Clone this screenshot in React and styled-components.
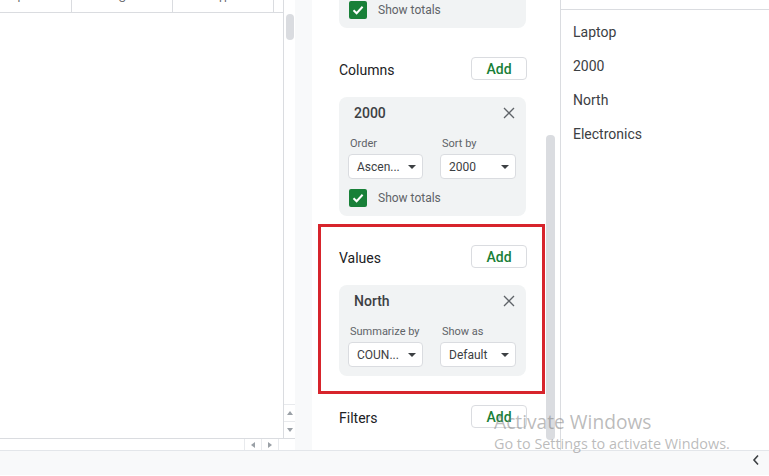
import React from 'react';
import styled, { createGlobalStyle } from 'styled-components';

const GlobalStyle = createGlobalStyle`
  html, body {
    margin: 0;
    padding: 0;
    background: #ffffff;
  }
  body {
    font-family: Roboto, "Liberation Sans", Arial, sans-serif;
    overflow: hidden;
  }
`;

const Frame = styled.div`
  position: relative;
  width: 769px;
  height: 476px;
  display: flex;
  flex-direction: column;
  overflow: hidden;
  background: #ffffff;
`;

const Main = styled.div`
  display: flex;
  height: 450px;
  flex-shrink: 0;
`;

/* spreadsheet */

const SheetArea = styled.div`
  width: 295px;
  display: flex;
  flex-direction: column;
`;

const SheetBody = styled.div`
  flex: 1;
  display: flex;
`;

const Grid = styled.div`
  width: 283px;
  display: flex;
  flex-direction: column;
`;

const HeaderRow = styled.div`
  height: 12px;
  display: flex;
  border-bottom: 1px solid #dadce0;
  overflow: hidden;
`;

const HeaderCell = styled.div`
  width: ${props => props.width}px;
  flex-shrink: 0;
  border-right: ${props => (props.last ? 'none' : '1px solid #dadce0')};
  padding-right: ${props => props.shift || 0}px;
  box-sizing: border-box;
  text-align: center;
  font-size: 11px;
  color: #5f6368;
  line-height: 12px;
  overflow: hidden;

  span {
    display: block;
    margin-top: -7px;
  }
`;

const VScroll = styled.div`
  width: 12px;
  border-left: 1px solid #dadce0;
  display: flex;
  flex-direction: column;
  align-items: center;
  padding-top: 14px;
`;

const ScrollThumb = styled.div`
  width: ${props => props.w || 8}px;
  height: ${props => props.h}px;
  border-radius: 4px;
  background: #dadce0;
`;

const Spacer = styled.div`
  flex: 1;
`;

const ArrowCell = styled.div`
  width: 100%;
  height: 16px;
  border-top: 1px solid #e8eaed;
  display: flex;
  align-items: center;
  justify-content: center;
`;

const Tri = styled.div`
  width: 0;
  height: 0;
  border-left: 3px solid transparent;
  border-right: 3px solid transparent;
  ${props => (props.up
    ? 'border-bottom: 4px solid #9aa0a6;'
    : 'border-top: 4px solid #9aa0a6;')}
`;

const HScrollRow = styled.div`
  height: 11px;
  border-top: 1px solid #dadce0;
  display: flex;
`;

const HArrow = styled.div`
  width: 16px;
  border-left: 1px solid #e8eaed;
  display: flex;
  align-items: center;
  justify-content: center;
`;

const SideTri = styled.div`
  width: 0;
  height: 0;
  border-top: 3px solid transparent;
  border-bottom: 3px solid transparent;
  ${props => (props.left
    ? 'border-right: 4px solid #9aa0a6;'
    : 'border-left: 4px solid #9aa0a6;')}
`;

/* gutter between sheet and panel */

const Gutter = styled.div`
  width: 17px;
  background: #f8f9fa;
  display: flex;
  flex-direction: column;
  align-items: flex-end;
  padding-top: 172px;
  box-sizing: border-box;
`;

const DragDots = styled.div`
  display: flex;
  flex-direction: column;
  gap: 3px;
  margin-right: -6px;

  i {
    display: block;
    width: 4px;
    height: 4px;
    border-radius: 50%;
    background: #5f6368;
  }
`;

/* pivot editor panel */

const Panel = styled.div`
  position: relative;
  width: 248px;
  display: flex;
  background: #ffffff;
`;

const PanelContent = styled.div`
  width: 188px;
  padding-left: 27px;
  display: flex;
  flex-direction: column;
`;

const PanelScroll = styled.div`
  flex: 1;
  display: flex;
  justify-content: flex-end;
  padding: 135px 5px 0 0;
`;

const Section = styled.div`
  margin-top: 29px;
  display: flex;
  flex-direction: column;
`;

const SectionHead = styled.div`
  height: 23px;
  display: flex;
  align-items: center;
  justify-content: space-between;
`;

const SectionLabel = styled.div`
  font-size: 14px;
  color: #202124;
  padding-top: 3px;
`;

const AddButton = styled.button`
  width: 56px;
  height: 23px;
  border: 1px solid #dadce0;
  border-radius: 4px;
  background: #ffffff;
  color: #188038;
  font-family: Roboto, "Liberation Sans", Arial, sans-serif;
  font-size: 14px;
  font-weight: 500;
  padding: 0;
  margin-right: 0;
`;

const Card = styled.div`
  background: #f1f3f4;
  border-radius: ${props => (props.clipped ? '0 0 8px 8px' : '8px')};
  padding: ${props => (props.clipped ? '1px' : '0')} 10px 9px 9px;
  margin-top: ${props => (props.clipped ? '0' : '17px')};
  display: flex;
  flex-direction: column;
  width: 187px;
  box-sizing: border-box;
`;

const CardTitle = styled.div`
  height: 32px;
  display: flex;
  align-items: center;
  justify-content: space-between;
  padding-left: 6px;
  font-size: 14px;
  font-weight: 500;
  color: #3c4043;
`;

const CloseIcon = styled.svg`
  width: 12px;
  height: 12px;
  margin-right: 1px;
`;

const Fields = styled.div`
  display: flex;
  gap: 17px;
  padding-top: 9px;
`;

const Field = styled.div`
  width: ${props => props.width}px;
  display: flex;
  flex-direction: column;
`;

const FieldLabel = styled.div`
  font-size: 11px;
  line-height: 12px;
  color: #5f6368;
  padding-left: 2px;
  margin-bottom: 4px;
`;

const Select = styled.div`
  height: 25px;
  background: #ffffff;
  border: 1px solid #dadce0;
  border-radius: 4px;
  box-sizing: border-box;
  display: flex;
  align-items: center;
  justify-content: space-between;
  padding: 0 6px 0 8px;
  font-size: 12px;
  color: #3c4043;
`;

const Caret = styled.div`
  width: 0;
  height: 0;
  border-left: 4px solid transparent;
  border-right: 4px solid transparent;
  border-top: 4px solid #3c4043;
`;

const CheckRow = styled.div`
  display: flex;
  align-items: center;
  gap: 11px;
  margin-top: ${props => props.gap || 0}px;
  padding-left: 1px;
  font-size: 12px;
  color: #5f6368;
`;

const CheckBox = styled.div`
  width: 18px;
  height: 18px;
  border-radius: 2px;
  background: #188038;
  display: flex;
  align-items: center;
  justify-content: center;
`;

const Highlight = styled.div`
  position: absolute;
  left: 6px;
  top: 224px;
  width: 227px;
  height: 170px;
  border: 3px solid #d7242c;
  box-sizing: border-box;
  pointer-events: none;
`;

/* preview column on the right */

const RightPane = styled.div`
  flex: 1;
  border-left: 1px solid #dadce0;
  display: flex;
  flex-direction: column;
`;

const RightHead = styled.div`
  height: 9px;
  border-bottom: 1px solid #dadce0;
`;

const ValueList = styled.div`
  padding: 5px 0 0 12px;
  display: flex;
  flex-direction: column;
`;

const ValueItem = styled.div`
  height: 34px;
  line-height: 34px;
  font-size: 14px;
  color: #3c4043;
`;

/* bottom */

const BottomBar = styled.div`
  height: 21px;
  flex-shrink: 0;
  border-top: 1px solid #e3e6ea;
  background: #f8f9fa;
  display: flex;
  justify-content: flex-end;
  padding: 3px 9px 0 0;
`;

const Watermark = styled.div`
  position: absolute;
  left: 494px;
  top: 409px;
  font-family: "Open Sans", "Noto Sans", sans-serif;
  color: rgba(120, 120, 120, 0.5);
  pointer-events: none;
`;

const WatermarkTitle = styled.div`
  font-size: 19.2px;
  line-height: 25px;
`;

const WatermarkText = styled.div`
  font-size: 14.4px;
  line-height: 20px;
`;

const Check = () => (
  <svg width="14" height="14" viewBox="0 0 14 14">
    <path d="M2.5 7.2 L5.6 10.2 L11.6 3.8" fill="none" stroke="#ffffff" strokeWidth="2" />
  </svg>
);

const Close = () => (
  <CloseIcon viewBox="0 0 12 12">
    <path d="M1 1 L11 11 M11 1 L1 11" stroke="#5f6368" strokeWidth="1.3" fill="none" />
  </CloseIcon>
);

const PivotCard = ({ title, fields, totals }) => (
  <Card>
    <CardTitle>
      {title}
      <Close />
    </CardTitle>
    <Fields>
      {fields.map((f, i) => (
        <Field key={f.label + '-' + i} width={f.width}>
          <FieldLabel>{f.label}</FieldLabel>
          <Select>
            {f.value}
            <Caret />
          </Select>
        </Field>
      ))}
    </Fields>
    {totals && (
      <CheckRow gap={10}>
        <CheckBox><Check /></CheckBox>
        Show totals
      </CheckRow>
    )}
  </Card>
);

const columns = [
  { letter: 'F', width: 72, shift: 30 },
  { letter: 'G', width: 101 },
  { letter: 'H', width: 101 },
  { letter: '', width: 9, last: true },
];

const values = ['Laptop', '2000', 'North', 'Electronics'];

export default function App() {
  return (
    <Frame>
      <GlobalStyle />
      <Main>
        <SheetArea>
          <SheetBody>
            <Grid>
              <HeaderRow>
                {columns.map((c, i) => (
                  <HeaderCell key={'col-' + i} width={c.width} shift={c.shift} last={c.last}>
                    <span>{c.letter}</span>
                  </HeaderCell>
                ))}
              </HeaderRow>
            </Grid>
            <VScroll>
              <ScrollThumb h={26} />
              <Spacer />
              <ArrowCell><Tri up /></ArrowCell>
              <ArrowCell><Tri /></ArrowCell>
            </VScroll>
          </SheetBody>
          <HScrollRow>
            <Spacer />
            <HArrow><SideTri left /></HArrow>
            <HArrow><SideTri /></HArrow>
            <HArrow />
          </HScrollRow>
        </SheetArea>

        <Gutter>
          <DragDots><i /><i /><i /></DragDots>
        </Gutter>

        <Panel>
          <PanelContent>
            <Card clipped>
              <CheckRow>
                <CheckBox><Check /></CheckBox>
                Show totals
              </CheckRow>
            </Card>

            <Section>
              <SectionHead>
                <SectionLabel>Columns</SectionLabel>
                <AddButton>Add</AddButton>
              </SectionHead>
              <PivotCard
                title="2000"
                totals
                fields={[
                  { label: 'Order', value: 'Ascen...', width: 75 },
                  { label: 'Sort by', value: '2000', width: 76 },
                ]}
              />
            </Section>

            <Section>
              <SectionHead>
                <SectionLabel>Values</SectionLabel>
                <AddButton>Add</AddButton>
              </SectionHead>
              <PivotCard
                title="North"
                fields={[
                  { label: 'Summarize by', value: 'COUN...', width: 75 },
                  { label: 'Show as', value: 'Default', width: 76 },
                ]}
              />
            </Section>

            <Section>
              <SectionHead>
                <SectionLabel>Filters</SectionLabel>
                <AddButton>Add</AddButton>
              </SectionHead>
            </Section>
          </PanelContent>
          <PanelScroll>
            <ScrollThumb w={9} h={305} />
          </PanelScroll>
          <Highlight />
        </Panel>

        <RightPane>
          <RightHead />
          <ValueList>
            {values.map((v, i) => (
              <ValueItem key={v + '-' + i}>{v}</ValueItem>
            ))}
          </ValueList>
        </RightPane>
      </Main>

      <BottomBar>
        <svg width="8" height="12" viewBox="0 0 8 12">
          <path d="M6 1.5 L2 6 L6 10.5" fill="none" stroke="#3c4043" strokeWidth="1.6" />
        </svg>
      </BottomBar>

      <Watermark>
        <WatermarkTitle>Activate Windows</WatermarkTitle>
        <WatermarkText>Go to Settings to activate Windows.</WatermarkText>
      </Watermark>
    </Frame>
  );
}
